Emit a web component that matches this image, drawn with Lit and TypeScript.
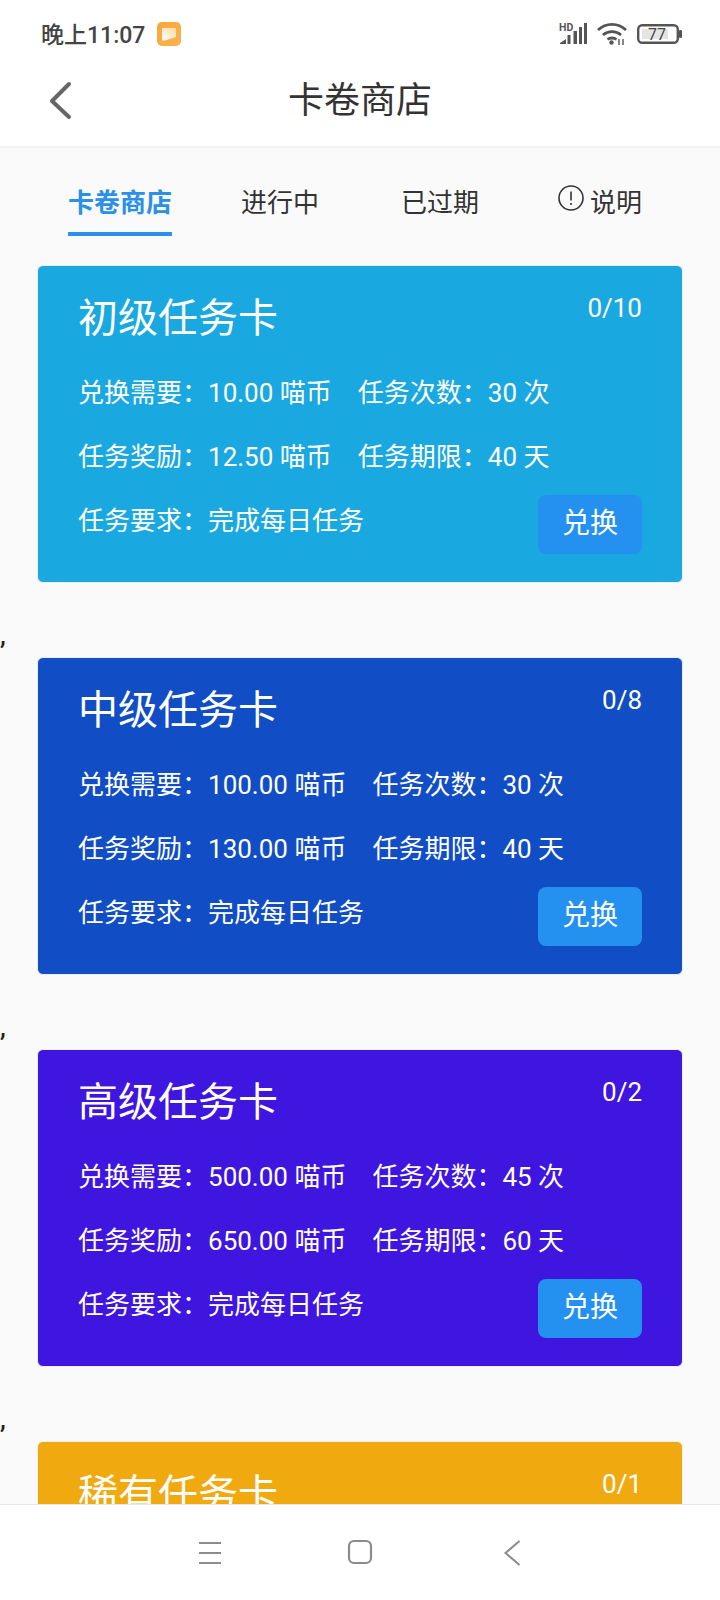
import { LitElement, html, css } from "lit";
import { customElement } from "lit/decorators.js";

interface Card {
  name: string;
  count: string;
  color: string;
  need?: string;
  reward?: string;
  times?: number;
  days?: number;
}

const cards: Card[] = [
  { name: "初级任务卡", count: "0/10", need: "10.00", reward: "12.50", times: 30, days: 40, color: "#1aa8e0" },
  { name: "中级任务卡", count: "0/8", need: "100.00", reward: "130.00", times: 30, days: 40, color: "#114dc5" },
  { name: "高级任务卡", count: "0/2", need: "500.00", reward: "650.00", times: 45, days: 60, color: "#3f15e0" },
  { name: "稀有任务卡", count: "0/1", color: "#f0aa10" },
];

@customElement("app-root")
export class AppRoot extends LitElement {
  static styles = css`
    :host {
      display: block;
      position: relative;
      width: 720px;
      height: 1600px;
      overflow: hidden;
      background: #fafafa;
      font-family: Roboto, "Noto Sans CJK SC", sans-serif;
      color: #333;
    }
    .top { background: #fff; border-bottom: 2px solid #f3f3f3; height: 148px; box-sizing: border-box; }
    .status { height: 68px; display: flex; align-items: center; justify-content: space-between; padding: 0 38px 0 41px; }
    .time { display: flex; align-items: center; gap: 12px; font-size: 23px; font-weight: 500; color: #444; height: 24px; }
    .time span { margin-top: -2px; }
    .sys { display: flex; align-items: center; }
    .sig { margin-right: 9px; }
    .wifi { margin-right: 10px; }
    .bar { height: 64px; position: relative; display: flex; align-items: center; justify-content: center; font-size: 36px; color: #333; }
    .title { margin-top: -6px; }
    .back { position: absolute; left: 47px; top: 13px; }
    .tabs { display: flex; height: 88px; padding: 0 0 0 68px; }
    .tab { font-size: 26px; line-height: 34px; padding-top: 38px; color: #333; box-sizing: border-box; height: 88px; }
    .tab.on { color: #2a90e8; font-weight: 700; border-bottom: 4px solid #2a90e8; }
    .t1 { width: 104px; margin-right: 69px; }
    .t2 { margin-right: 82px; }
    .t3 { margin-right: 79px; }
    .t4 { display: flex; align-items: flex-start; gap: 6px; }
    .t4 svg { margin-top: -1px; }
    .list { padding-top: 29px; }
    .comma { height: 74px; font-size: 26px; line-height: 104px; color: #222; font-weight: 500; }
    .card {
      margin: 0 37px;
      height: 318px;
      box-sizing: border-box;
      border: 1px solid #ebeef5;
      border-radius: 6px;
      color: #fff;
      padding: 26px 40px 0 40px;
    }
    .head { display: flex; justify-content: space-between; align-items: flex-start; height: 60px; }
    .name { font-size: 40px; line-height: 50px; margin-top: 2px; }
    .count { font-size: 26px; line-height: 30px; margin-top: 1px; }
    .grid { display: grid; grid-template-columns: auto auto; justify-content: start; column-gap: 26px; margin-top: 23px; row-gap: 28px; }
    .cell { font-size: 26px; line-height: 36px; white-space: nowrap; }
    .foot { display: flex; justify-content: space-between; align-items: flex-start; margin-top: 20px; }
    .foot .cell { margin-top: 8px; }
    .btn { width: 104px; height: 59px; box-sizing: border-box; padding-bottom: 8px; border-radius: 8px; background: #2490f0; font-size: 28px; display: flex; align-items: center; justify-content: center; }
    .nav { position: absolute; left: 0; right: 0; bottom: 0; height: 96px; background: #fff; border-top: 1px solid #e6e6e6; box-sizing: border-box; }
    .nav svg { position: absolute; }
    .n1 { left: 198px; top: 36px; }
    .n2 { left: 347px; top: 34px; }
    .n3 { left: 502px; top: 34px; }
  `;

  private row(c: Card, last: boolean) {
    return html`<div class="card" style="background:${c.color}">
      <div class="head"><div class="name">${c.name}</div><div class="count">${c.count}</div></div>
      ${c.need
        ? html`<div class="grid">
              <div class="cell">兑换需要：${c.need} 喵币</div><div class="cell">任务次数：${c.times} 次</div>
              <div class="cell">任务奖励：${c.reward} 喵币</div><div class="cell">任务期限：${c.days} 天</div>
            </div>
            <div class="foot"><div class="cell">任务要求：完成每日任务</div><div class="btn">兑换</div></div>`
        : ""}
    </div>${last ? "" : html`<div class="comma">,</div>`}`;
  }

  render() {
    return html`<div lang="zh-CN">
      <div class="top">
        <div class="status">
          <div class="time"><span>晚上11:07</span>
            <svg width="24" height="24" viewBox="0 0 24 24"><defs><linearGradient id="g" x1="0" y1="0" x2="1" y2="1"><stop offset="0" stop-color="#f9a63a"/><stop offset="1" stop-color="#fbb44f"/></linearGradient><linearGradient id="w" x1="1" y1="0" x2="0" y2="1"><stop offset="0" stop-color="#fdd9a0"/><stop offset="1" stop-color="#ffffff"/></linearGradient></defs><rect width="24" height="24" rx="5" fill="url(#g)"/><path d="M5 6h14v9l-11 3.500H5z" fill="url(#w)"/></svg>
          </div>
          <div class="sys">
            <svg class="sig" width="29" height="24" viewBox="0 0 29 24"><text x="0" y="9" font-size="10.500" font-weight="700" font-family="Roboto" fill="#555">HD</text><g fill="#555"><path d="M1 21l6-4v5H1z"/><rect x="8.500" y="13" width="3" height="9"/><rect x="14.500" y="9" width="3.500" height="13"/><rect x="20" y="5" width="3" height="17"/><rect x="25" y="1" width="3" height="21"/></g></svg>
            <svg class="wifi" width="30" height="24" viewBox="0 0 30 24" fill="none" stroke="#555" stroke-width="2.800"><path d="M1 8c8-7.500 20-7.500 28 0"/><path d="M6 13c5-4.500 13-4.500 18 0"/><path d="M10.500 17.500c2.500-2 6.500-2 9 0"/><circle cx="14.500" cy="20.500" r="2.200" fill="#555" stroke="none"/><path d="M22 17v6M26 17v6" stroke-width="1.400"/></svg>
            <svg width="45" height="20" viewBox="0 0 45 20"><rect x="1.200" y="1.200" width="39.600" height="17.600" rx="4" fill="#fff" stroke="#555" stroke-width="2.400"/><rect x="5" y="5" width="26" height="10" fill="#e4e4e4"/><rect x="42" y="6" width="3" height="8" rx="1" fill="#555"/><text x="20" y="16" text-anchor="middle" font-size="16" font-family="Roboto" fill="#444">77</text></svg>
          </div>
        </div>
        <div class="bar">
          <svg class="back" width="26" height="40" viewBox="0 0 26 40" fill="none" stroke="#666" stroke-width="4" stroke-linecap="round" stroke-linejoin="round"><path d="M22 3L5 20 22 36"/></svg>
          <span class="title">卡卷商店</span>
        </div>
      </div>
      <div class="tabs">
        <div class="tab on t1">卡卷商店</div>
        <div class="tab t2">进行中</div>
        <div class="tab t3">已过期</div>
        <div class="tab t4"><svg width="26" height="26" viewBox="0 0 26 26" fill="none" stroke="#333" stroke-width="1.600"><circle cx="13" cy="13" r="12"/><path d="M13 6.500v9M13 18v2"/></svg>说明</div>
      </div>
      <div class="list">${cards.map((c, i) => this.row(c, i === cards.length - 1))}</div>
      <div class="nav">
        <svg class="n1" width="24" height="24" viewBox="0 0 24 24" stroke="#8c8c8c" stroke-width="2"><path d="M1 2h22M1 12h22M1 22h22"/></svg>
        <svg class="n2" width="26" height="26" viewBox="0 0 26 26" fill="none" stroke="#8c8c8c" stroke-width="2.200"><rect x="2" y="2" width="22" height="22" rx="5"/></svg>
        <svg class="n3" width="20" height="28" viewBox="0 0 20 28" fill="none" stroke="#8c8c8c" stroke-width="2"><path d="M17.500 2L3.500 14l14 12"/></svg>
      </div>
    </div>`;
  }
}
